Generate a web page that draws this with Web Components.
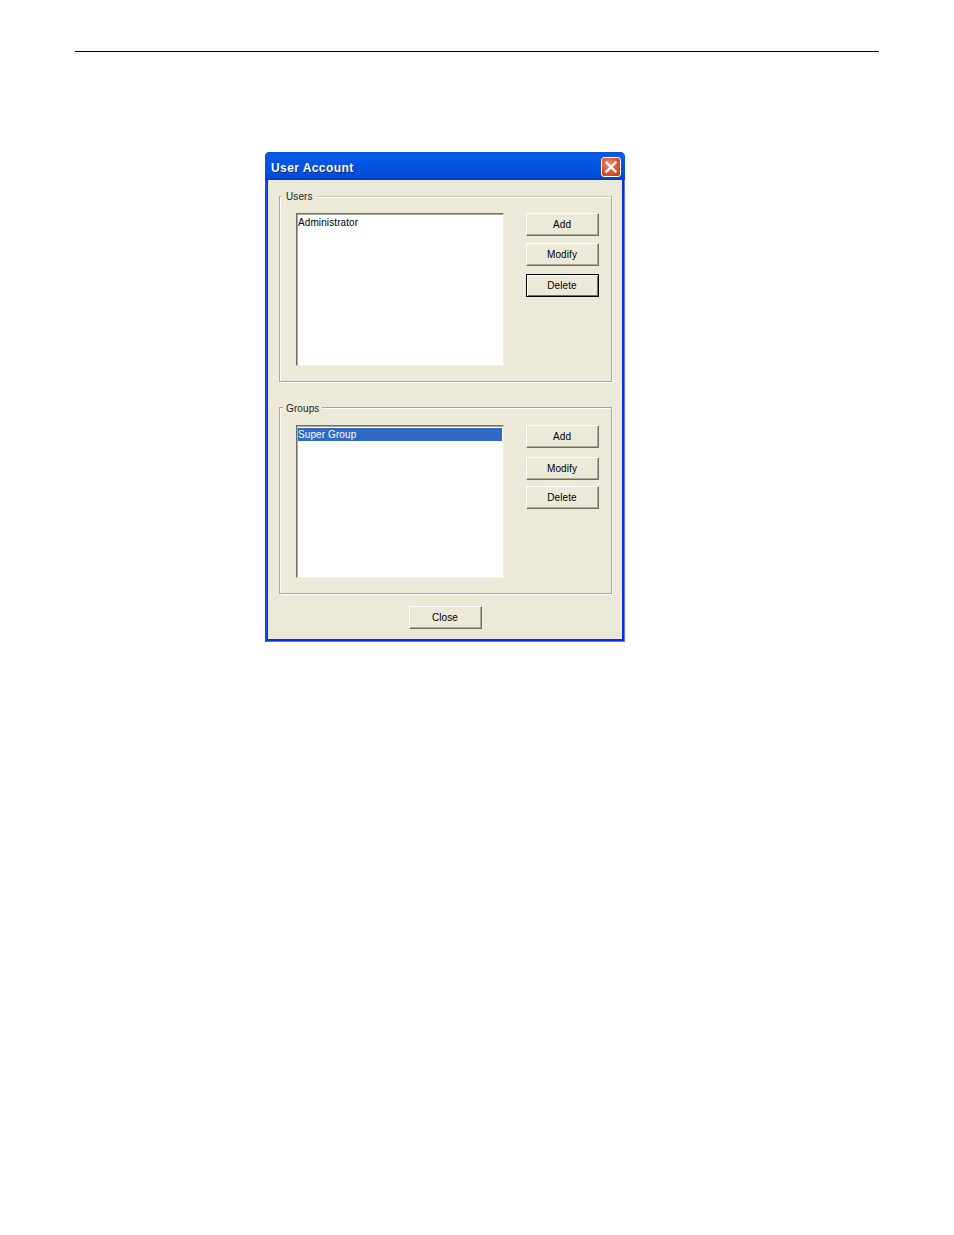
<!DOCTYPE html>
<html><head><meta charset="utf-8"><title>User Account</title>
<style>html,body{margin:0;background:#fff}body{font-family:"Liberation Sans",sans-serif}</style></head>
<body>
<doc-page>
<xp-window title="User Account">
  <xp-group label="Users">
    <xp-list><xp-item>Administrator</xp-item></xp-list>
    <xp-btns slot="actions" gaps="7,8">
      <xp-btn>Add</xp-btn><xp-btn>Modify</xp-btn><xp-btn focused>Delete</xp-btn>
    </xp-btns>
  </xp-group>
  <xp-group label="Groups" class="second">
    <xp-list><xp-item selected>Super Group</xp-item></xp-list>
    <xp-btns slot="actions" gaps="9,6">
      <xp-btn>Add</xp-btn><xp-btn>Modify</xp-btn><xp-btn>Delete</xp-btn>
    </xp-btns>
  </xp-group>
  <xp-footer><xp-btn>Close</xp-btn></xp-footer>
</xp-window>
</doc-page>
<script>
function def(name, css, html, init){
  customElements.define(name, class extends HTMLElement{
    constructor(){super();const r=this.attachShadow({mode:'open'});r.innerHTML='<style>'+css+'</style>'+html;}
    connectedCallback(){ if(init) init(this); }
  });
}
def('doc-page',`
 :host{display:block;width:954px;height:1235px;box-sizing:border-box;padding:51px 75px 0;background:#fff}
 .rule{height:1px;background:#000}
 .center{display:flex;padding:100px 0 0 190px}
`,`<div class="rule"></div><div class="center"><slot></slot></div>`);

def('xp-window',`
 :host{display:block;width:360px;height:490px;box-sizing:border-box;position:relative;background:#0831d9;border-radius:5px 5px 0 0;overflow:hidden;
   box-shadow:inset 1px 0 0 #0a55e8,inset 2px 0 0 #0a50ec,inset -1px -1px 0 #5f74e2;
   font:10px/13px "Liberation Sans",sans-serif;color:#000}
 .title{height:28px;box-sizing:border-box;display:flex;align-items:center;justify-content:space-between;padding:2px 4px 0 6px;
   background:linear-gradient(#0a4fd8 0,#0a5ae8 3px,#0456e2 10px,#0350da 22px,#0345cf 26px,#0339c0 28px);}
 .text{color:#fff;font:bold 12px/14px "Liberation Sans",sans-serif;letter-spacing:.42px;text-shadow:1px 1px 0 #0a2a90;white-space:nowrap;padding-top:1px}
 .close{width:20px;height:20px;margin-bottom:1px;box-sizing:border-box;border:1px solid #fff;border-radius:3px;background:radial-gradient(circle at 40% 35%,#ec8a6a,#d9502a 60%,#c13a12);display:flex;align-items:center;justify-content:center}
 .body{margin:0 3px 3px;height:459px;box-sizing:border-box;background:#ece9d8;padding:16px 10px 0 11px;display:flex;flex-direction:column}
`,`<div class="title"><span class="text" id="t"></span><span class="close"><svg width="12" height="12" viewBox="0 0 12 12"><path d="M1.5 1.5 10.5 10.5M10.5 1.5 1.5 10.5" stroke="#fff" stroke-width="2.4" stroke-linecap="square"/></svg></span></div><div class="body"><slot></slot></div>`,
 el=>{el.shadowRoot.getElementById('t').textContent=el.getAttribute('title');});

def('xp-group',`
 :host{display:block;width:333px;height:186px;box-sizing:border-box;position:relative;border:1px solid #aca899;border-top-color:#c9c6b6;box-shadow:inset 1px 1px 0 #fff,1px 1px 0 #fff;flex:none}
 :host(.second){margin-top:25px;height:187px;border-top-color:#a5a294}
 .label{position:absolute;left:3px;top:-7px;background:#ece9d8;padding:0 3px;color:#222;letter-spacing:.1px}
 :host(.second) .label{top:-6px}
 .row{display:flex;justify-content:flex-start;padding:16px 0 0 16px}
 :host(.second) .row{padding-top:17px}
 .gap{width:22px;flex:none}
`,`<span class="label" id="l"></span><div class="row"><slot></slot><span class="gap"></span><slot name="actions"></slot></div>`,
 el=>{el.shadowRoot.getElementById('l').textContent=el.getAttribute('label');});

def('xp-list',`
 :host{display:block;width:208px;height:153px;box-sizing:border-box;background:#fff;border:1px solid;border-color:#716f64 #f1efe2 #f1efe2 #716f64;box-shadow:inset 1px 1px 0 #aca899;padding:2px 1px 0 1px}
`,`<slot></slot>`);

def('xp-item',`
 :host{display:block;height:13px;padding-left:0;line-height:13px;color:#000;letter-spacing:.1px;white-space:nowrap}
 :host([selected]){background:#316ac5;color:#fff}
`,`<slot></slot>`);

def('xp-btns',`
 :host{display:flex;flex-direction:column;width:73px}
 ::slotted(xp-btn:nth-child(2)){margin-top:var(--g1)}
 ::slotted(xp-btn:nth-child(3)){margin-top:var(--g2)}
`,`<slot></slot>`,
 el=>{const [a,b]=el.getAttribute('gaps').split(',');el.style.setProperty('--g1',a+'px');el.style.setProperty('--g2',b+'px');});

def('xp-btn',`
 :host{display:flex;align-items:center;justify-content:center;width:73px;height:23px;box-sizing:border-box;background:#ece9d8;
   border:1px solid;border-color:#fff #716f64 #716f64 #fff;box-shadow:inset -1px -1px 0 #aca899;color:#000;padding-right:1px;letter-spacing:.1px;flex:none}
 :host([focused]){border-color:#000;box-shadow:inset 1px 1px 0 #fff,inset -1px -1px 0 #716f64}
`,`<slot></slot>`);

def('xp-footer',`
 :host{display:flex;justify-content:center;margin-top:12px;padding-right:0;width:333px}
`,`<slot></slot>`);
</script>
</body></html>
